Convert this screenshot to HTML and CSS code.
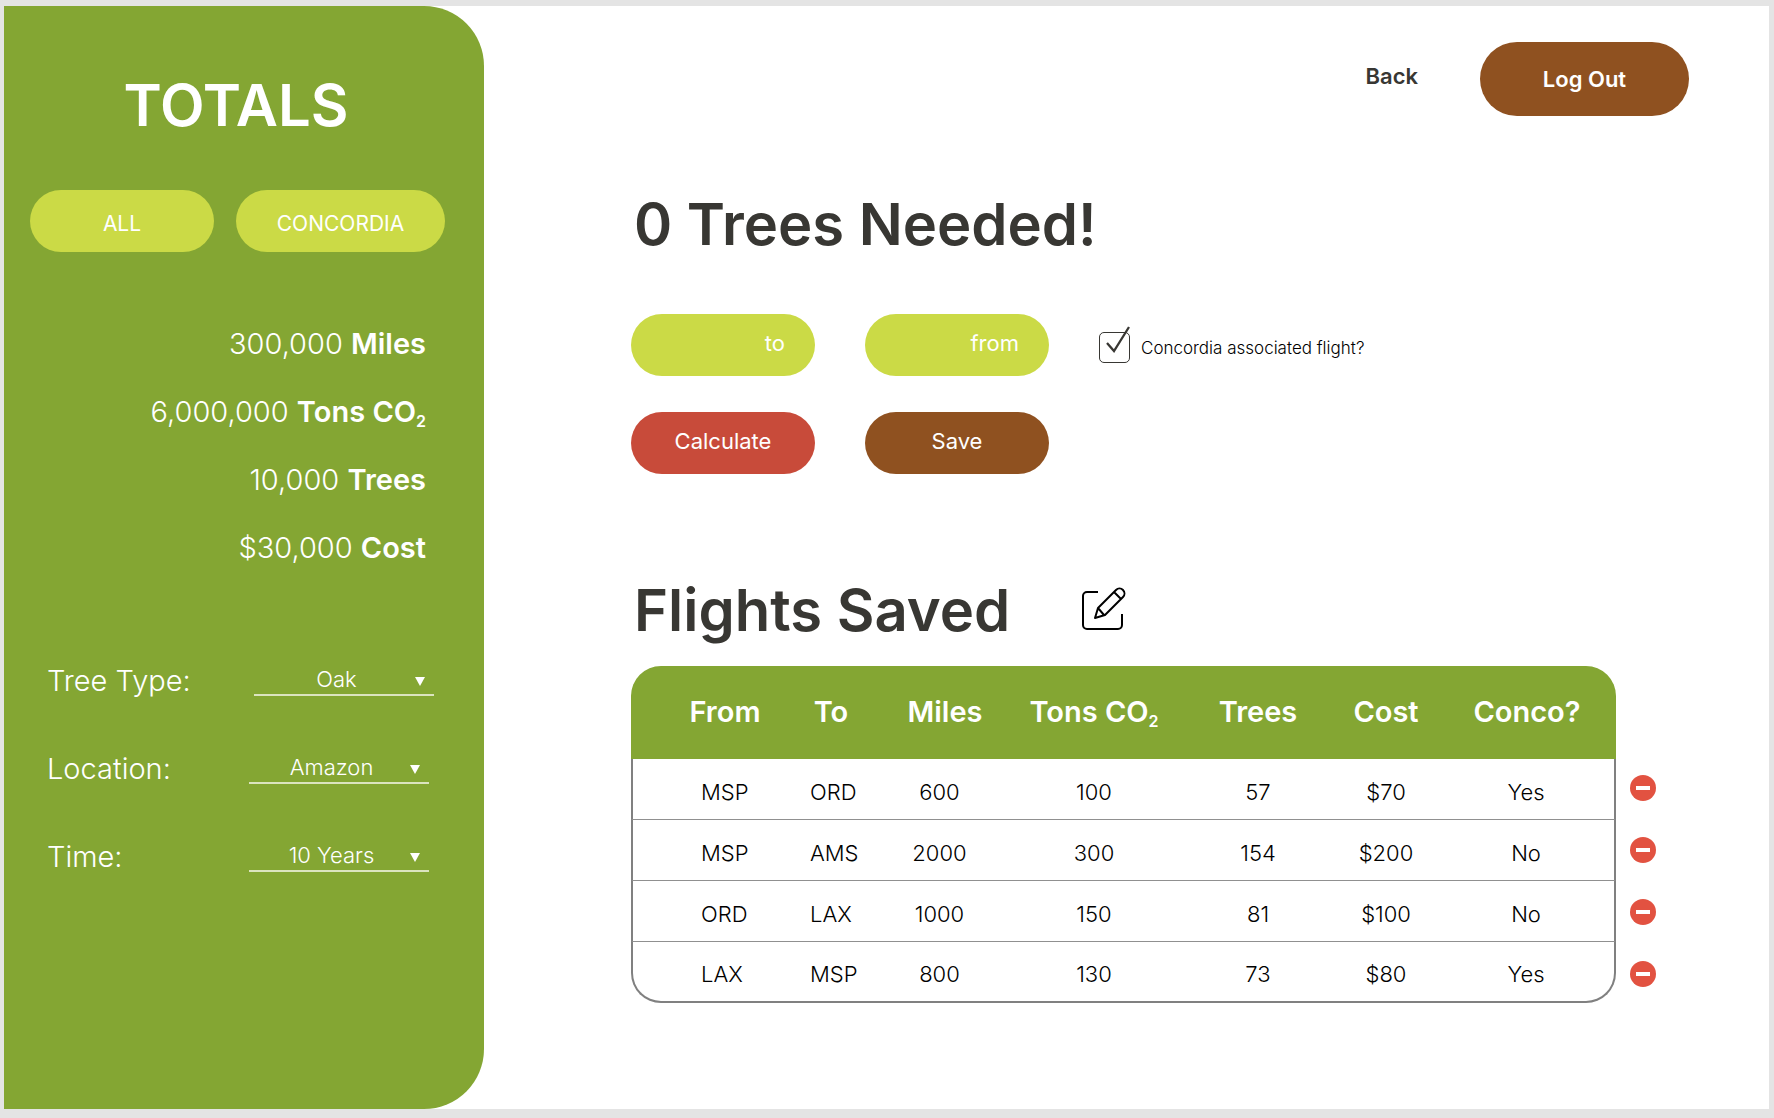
FILE: index.html
```html
<!DOCTYPE html>
<html lang="en">
<head>
<meta charset="utf-8">
<meta name="viewport" content="width=device-width, initial-scale=1">
<title>Flights Saved</title>
<link rel="stylesheet" href="styles.css">
</head>
<body>
<div class="page">
  <aside class="sidebar">
    <h1 class="title sidebar-title">TOTALS</h1>
    <div class="filters">
      <button class="pill pill-lime filter" type="button">ALL</button>
      <button class="pill pill-lime filter filter-wide" type="button">CONCORDIA</button>
    </div>
    <ul class="stats">
      <li>300,000 <strong>Miles</strong></li>
      <li>6,000,000 <strong>Tons CO<sub>2</sub></strong></li>
      <li>10,000 <strong>Trees</strong></li>
      <li>$30,000 <strong>Cost</strong></li>
    </ul>
    <div class="fields">
      <div class="field field-tree">
        <label for="tree">Tree Type:</label>
        <div class="select">
          <select id="tree"><option>Oak</option></select>
          <svg class="arrow" viewBox="0 0 10 9" aria-hidden="true"><path d="M0 0h10L5 9z"/></svg>
        </div>
      </div>
      <div class="field">
        <label for="location">Location:</label>
        <div class="select">
          <select id="location"><option>Amazon</option></select>
          <svg class="arrow" viewBox="0 0 10 9" aria-hidden="true"><path d="M0 0h10L5 9z"/></svg>
        </div>
      </div>
      <div class="field">
        <label for="time">Time:</label>
        <div class="select">
          <select id="time"><option>10 Years</option></select>
          <svg class="arrow" viewBox="0 0 10 9" aria-hidden="true"><path d="M0 0h10L5 9z"/></svg>
        </div>
      </div>
    </div>
  </aside>

  <main class="main">
    <nav class="topbar">
      <a class="back" href="#">Back</a>
      <button class="logout" type="button">Log Out</button>
    </nav>

    <section class="content">
      <h2 class="title">0 Trees Needed!</h2>
      <form class="calculator">
        <input class="pill pill-lime place" type="text" placeholder="to" aria-label="to">
        <input class="pill pill-lime place" type="text" placeholder="from" aria-label="from">
        <div class="check">
          <span class="check-box">
            <input id="concordia" type="checkbox" checked>
            <svg class="check-mark" viewBox="0 0 31 37" aria-hidden="true"><path d="M8 17l7 8L30 1"/></svg>
          </span>
          <label for="concordia">Concordia associated flight?</label>
        </div>
        <button class="pill pill-red action" type="button">Calculate</button>
        <button class="pill pill-brown action" type="button">Save</button>
      </form>

      <div class="saved-heading">
        <h2 class="title">Flights Saved</h2>
        <button class="edit" type="button" aria-label="Edit">
          <svg viewBox="0 0 45 45" aria-hidden="true">
            <path d="M17 6H6a4 4 0 0 0-4 4v29a4 4 0 0 0 4 4h31a4 4 0 0 0 4-4V28"/>
            <path d="M14 32l3-10L35 4a4.700 4.700 0 0 1 7 7L24 29zM17 22l6 7M33 6l7 7"/>
          </svg>
        </button>
      </div>

      <div class="saved">
        <table class="flights">
          <colgroup>
            <col class="col-from"><col class="col-to"><col class="col-miles"><col class="col-tons"><col class="col-trees"><col class="col-cost"><col class="col-conco">
          </colgroup>
          <thead>
            <tr><th>From</th><th>To</th><th>Miles</th><th>Tons CO<sub>2</sub></th><th>Trees</th><th>Cost</th><th>Conco?</th></tr>
          </thead>
          <tbody>
            <tr><td>MSP</td><td>ORD</td><td>600</td><td>100</td><td>57</td><td>$70</td><td>Yes</td></tr>
            <tr><td>MSP</td><td>AMS</td><td>2000</td><td>300</td><td>154</td><td>$200</td><td>No</td></tr>
            <tr><td>ORD</td><td>LAX</td><td>1000</td><td>150</td><td>81</td><td>$100</td><td>No</td></tr>
            <tr><td>LAX</td><td>MSP</td><td>800</td><td>130</td><td>73</td><td>$80</td><td>Yes</td></tr>
          </tbody>
        </table>
        <div class="removals">
          <button class="remove" type="button" aria-label="Remove flight 1"></button>
          <button class="remove" type="button" aria-label="Remove flight 2"></button>
          <button class="remove" type="button" aria-label="Remove flight 3"></button>
          <button class="remove" type="button" aria-label="Remove flight 4"></button>
        </div>
      </div>
    </section>
  </main>
</div>
</body>
</html>
```
FILE: styles.css
```css
:root {
  --green: #84a633;
  --lime: #cbda46;
  --brown: #8f5120;
  --red: #c84b3a;
  --ink: #383733;
}

* { box-sizing: border-box; }

body {
  margin: 0;
  background: #e4e4e4;
  color: #000;
  font-family: Inter, "Liberation Sans", sans-serif;
  font-size: 22px;
  font-weight: 300;
}

button, input, select {
  margin: 0;
  border: 0;
  font: inherit;
}

button { cursor: pointer; }

.page {
  display: flex;
  min-height: 100vh;
  border: solid #e4e4e4;
  border-width: 6px 5px 9px 4px;
  background: #fff;
}

.title {
  margin: 0;
  color: var(--ink);
  font-size: 58px;
  font-weight: 600;
  line-height: 70px;
  white-space: nowrap;
}

sub {
  font-size: 16px;
  font-weight: 600;
  line-height: 0;
  vertical-align: -5px;
}

.pill {
  height: 62px;
  padding: 0;
  border-radius: 31px;
  color: #fff;
  font-weight: 400;
}

.pill-lime { background: var(--lime); }
.pill-red { background: var(--red); }
.pill-brown { background: var(--brown); }

/* Sidebar */

.sidebar {
  flex: none;
  width: 480px;
  padding-top: 64px;
  border-radius: 0 60px 60px 0;
  background: var(--green);
  color: #fff;
}

.sidebar-title {
  padding-right: 16px;
  color: #fff;
  text-align: center;
}

.filters {
  display: flex;
  gap: 22px;
  margin-top: 50px;
  padding-left: 26px;
}

.filter {
  width: 184px;
  padding-top: 4px;
  font-size: 21px;
}

.filter-wide { width: 209px; }

.stats {
  margin: 58px 0 54px;
  padding: 0 58px 0 0;
  list-style: none;
  font-size: 29px;
  line-height: 68px;
  text-align: right;
}

.stats strong { font-weight: 600; }

.field {
  display: flex;
  align-items: center;
  justify-content: space-between;
  height: 88px;
  padding: 0 55px 0 43px;
}

.field-tree { padding-right: 50px; }

.field label { font-size: 29px; }

.select {
  position: relative;
  width: 180px;
}

.select select {
  display: block;
  width: 100%;
  height: 32px;
  padding: 0 15px 0 0;
  border-bottom: 2px solid #dbe4bf;
  border-radius: 0;
  appearance: none;
  background: none;
  color: #fff;
  font-size: 22px;
  text-align: center;
  text-align-last: center;
}

.arrow {
  position: absolute;
  right: 9px;
  bottom: 10px;
  width: 10px;
  height: 9px;
  fill: #fff;
  pointer-events: none;
}

/* Main area */

.main {
  flex: 1;
  min-width: 0;
  padding-top: 36px;
}

.topbar {
  display: flex;
  align-items: center;
  justify-content: flex-end;
  gap: 62px;
  padding-right: 80px;
}

.back {
  padding-bottom: 6px;
  color: var(--ink);
  font-weight: 600;
  text-decoration: none;
}

.logout {
  width: 209px;
  height: 74px;
  border-radius: 37px;
  background: var(--brown);
  color: #fff;
  font-weight: 600;
}

.content { padding: 73px 113px 0 147px; }

.content .title { padding-left: 3px; }

.calculator {
  display: grid;
  grid-template-columns: 184px 184px auto;
  gap: 36px 50px;
  margin-top: 55px;
}

.place {
  padding: 0 30px 5px;
  text-align: right;
}

.place::placeholder {
  color: #fff;
  opacity: 1;
}

.action { padding-bottom: 4px; }

.check {
  display: flex;
  align-items: center;
  gap: 11px;
  padding-top: 5px;
  color: #000;
  font-size: 17px;
}

.check-box {
  position: relative;
  width: 31px;
  height: 31px;
}

.check-box input {
  display: block;
  width: 31px;
  height: 31px;
  border: 1px solid var(--ink);
  border-radius: 5px;
  appearance: none;
}

.check-mark {
  position: absolute;
  bottom: 0;
  left: 0;
  width: 31px;
  height: 37px;
  fill: none;
  stroke: var(--ink);
  stroke-width: 2.300;
  pointer-events: none;
}

.saved-heading {
  display: flex;
  align-items: center;
  gap: 71px;
  margin-top: 101px;
}

.edit {
  height: 48px;
  padding: 0 0 3px;
  background: none;
}

.edit svg {
  display: block;
  width: 45px;
  height: 45px;
  fill: none;
  stroke: #000;
  stroke-width: 2;
  stroke-linejoin: round;
}

.saved {
  display: flex;
  gap: 14px;
  margin-top: 21px;
}

.flights {
  flex: 1;
  border-spacing: 0;
  table-layout: fixed;
  text-align: center;
}

.col-from { width: 147px; }
.col-to { width: 106px; }
.col-miles { width: 122px; }
.col-tons { width: 176px; }
.col-trees { width: 152px; }
.col-cost { width: 104px; }
.col-conco { width: 178px; }

.flights th {
  height: 93px;
  padding: 0 0 3px;
  background: var(--green);
  color: #fff;
  font-size: 29px;
  font-weight: 600;
  white-space: nowrap;
}

.flights td {
  height: 61px;
  padding: 5px 0 0;
  border-bottom: 1px solid #909090;
}

.flights th:first-child { padding-left: 41px; }

.flights td:first-child {
  padding-left: 68px;
  text-align: left;
}

.flights td:nth-child(2) {
  padding-left: 32px;
  text-align: left;
}

.flights td:nth-child(3) { padding-right: 11px; }

.flights th:first-child { border-top-left-radius: 30px; }
.flights th:last-child { border-top-right-radius: 30px; }
.flights td:first-child { border-left: 2px solid #808080; }
.flights td:last-child { border-right: 2px solid #808080; }
.flights tr:last-child td { border-bottom: 2px solid #808080; }
.flights tr:last-child td:first-child { border-bottom-left-radius: 30px; }
.flights tr:last-child td:last-child { border-bottom-right-radius: 30px; }

.removals {
  display: flex;
  flex-direction: column;
  gap: 36px;
  padding-top: 109px;
}

.remove {
  display: flex;
  align-items: center;
  justify-content: center;
  width: 26px;
  height: 26px;
  padding: 0;
  border-radius: 50%;
  background: #e25241;
}

.remove::before {
  width: 14px;
  height: 4px;
  background: #fff;
  content: "";
}
```
